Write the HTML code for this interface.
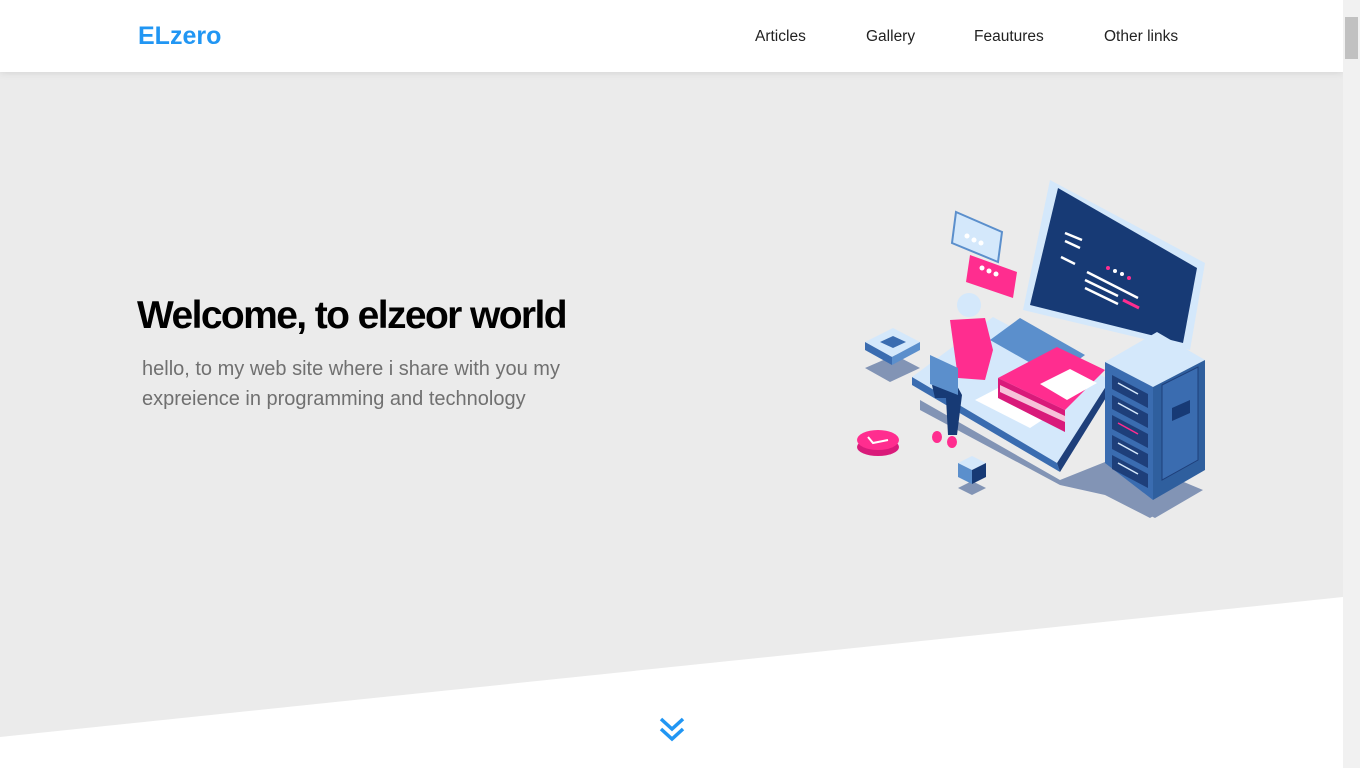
<!DOCTYPE html>
<html><head><meta charset="utf-8"><style>
html,body{margin:0;padding:0;width:1360px;height:768px;overflow:hidden;font-family:"Liberation Sans",sans-serif;background:#fff}
.page{position:absolute;left:0;top:0;width:1343px;height:768px;background:#ebebeb;overflow:hidden}
header{position:absolute;left:0;top:0;width:1343px;height:72px;background:#fff;box-shadow:0 0 8px rgba(0,0,0,.12);z-index:3}
.logo{position:absolute;left:138px;top:22px;font-size:25px;font-weight:bold;color:#2196f3}
nav a{position:absolute;top:28px;font-size:15.5px;color:#222;text-decoration:none}
h1{position:absolute;left:137px;top:294px;margin:0;font-size:39px;letter-spacing:-1.6px;font-weight:bold;color:#000}
p{position:absolute;left:142px;top:354px;margin:0;width:440px;font-size:20px;line-height:30px;color:#707070}
.sb{position:absolute;left:1343px;top:0;width:17px;height:768px;background:#f1f1f1}
.sb i{position:absolute;left:2px;top:17px;width:13px;height:42px;background:#c1c1c1}
</style></head><body>
<div class="page">
<header><div class="logo">ELzero</div>
<nav><a style="left:755px">Articles</a><a style="left:866px">Gallery</a><a style="left:974px">Feautures</a><a style="left:1104px">Other links</a></nav></header>
<h1>Welcome, to elzeor world</h1>
<p>hello, to my web site where i share with you my expreience in programming and technology</p>
<svg width="1343" height="768" style="position:absolute;left:0;top:0">
<polygon points="0,737 1343,597 1343,768 0,768" fill="#fff"/>
<path d="M661,719 L672,729 L683,719 M661,729 L672,739 L683,729" stroke="#2196f3" stroke-width="3.5" fill="none"/>
<polygon points="920,400 1060,480 1110,460 1140,470 1180,500 1150,518 1105,495 1060,485 920,410" fill="#8294b5"/>
<polygon points="865,368 895,355 920,368 890,382" fill="#8294b5"/>
<polygon points="958,488 972,481 986,488 972,495" fill="#8294b5"/>
<polygon points="1108,495 1155,470 1203,490 1155,518" fill="#8294b5"/>
<polygon points="912,377 993,317 1110,380 1057,463" fill="#d4e8fb"/>
<polygon points="912,377 1057,463 1060,472 912,385" fill="#3a6cb0"/>
<polygon points="1057,463 1110,380 1112,388 1060,472" fill="#1e3f7a"/>
<polygon points="990,340 1020,318 1085,355 1055,377" fill="#5b8fcc"/>
<polygon points="975,400 998,388 1050,415 1030,428" fill="#fff"/>
<polygon points="1050,180 1205,263 1190,350 1023,310" fill="#d4e8fb"/>
<polygon points="1058,188 1197,268 1183,343 1030,305" fill="#173a75"/>
<path d="M1065,233 L1082,240 M1065,241 L1080,248 M1061,257 L1075,264 M1087,272 L1138,298 M1085,280 L1118,296 M1085,288 L1118,304" stroke="#fff" stroke-width="2.5"/>
<path d="M1123,300 L1139,308" stroke="#ff2d8f" stroke-width="3"/>
<circle cx="1108" cy="268" r="2" fill="#ff2d8f"/><circle cx="1115" cy="271" r="2" fill="#fff"/><circle cx="1122" cy="274" r="2" fill="#fff"/><circle cx="1129" cy="278" r="2" fill="#ff2d8f"/>
<polygon points="970,255 1017,272 1013,298 966,282" fill="#ff2d8f"/>
<circle cx="982" cy="268" r="2.5" fill="#fff"/><circle cx="989" cy="271" r="2.5" fill="#fff"/><circle cx="996" cy="274" r="2.5" fill="#fff"/>
<polygon points="956,212 1002,232 998,262 952,243" fill="#d4e8fb" stroke="#5b8fcc" stroke-width="2"/>
<circle cx="967" cy="236" r="2.5" fill="#fff"/><circle cx="974" cy="240" r="2.5" fill="#fff"/><circle cx="981" cy="243" r="2.5" fill="#fff"/>
<polygon points="998,378 1057,347 1105,370 1065,410" fill="#ff2d8f"/>
<polygon points="998,378 1065,410 1065,432 998,398" fill="#d91a7a"/>
<polygon points="1000,385 1065,416 1065,422 1000,392" fill="#f7c3da"/>
<polygon points="1040,384 1070,369 1097,383 1067,400" fill="#fff"/>
<circle cx="969" cy="305" r="12" fill="#d4e8fb"/>
<polygon points="950,320 985,318 993,350 985,380 958,378" fill="#ff2d8f"/>
<polygon points="932,385 955,382 962,395 957,435 948,435 946,398 935,398" fill="#173a75"/>
<polygon points="930,355 958,368 958,395 930,384" fill="#5b8fcc"/>
<ellipse cx="937" cy="437" rx="5" ry="6" fill="#ff2d8f"/><ellipse cx="952" cy="442" rx="5" ry="6" fill="#ff2d8f"/>
<polygon points="865,342 893,328 920,342 892,357" fill="#d4e8fb"/>
<polygon points="865,342 892,357 892,365 865,350" fill="#3a6cb0"/>
<polygon points="892,357 920,342 920,350 892,365" fill="#5b8fcc"/>
<polygon points="880,342 893,336 906,342 893,348" fill="#3a6cb0"/>
<ellipse cx="878" cy="447" rx="21" ry="9" fill="#d91a7a"/>
<ellipse cx="878" cy="440" rx="21" ry="10" fill="#ff2d8f"/>
<path d="M868,437 L873,443 L888,440" stroke="#fff" stroke-width="2" fill="none"/>
<polygon points="958,463 972,456 986,463 972,470" fill="#d4e8fb"/>
<polygon points="958,463 972,470 972,484 958,477" fill="#5b8fcc"/>
<polygon points="972,470 986,463 986,477 972,484" fill="#173a75"/>
<polygon points="1105,362 1157,332 1205,360 1153,387" fill="#d4e8fb"/>
<polygon points="1105,362 1153,387 1153,500 1105,463" fill="#3a6cb0"/>
<polygon points="1153,387 1205,360 1205,470 1153,500" fill="#2f5f9e"/>
<polygon points="1162,385 1198,367 1198,460 1162,480" fill="#3a6cb0" stroke="#1e3f7a"/>
<polygon points="1172,408 1190,400 1190,413 1172,421" fill="#173a75"/>
<g fill="#1e3f7a"><polygon points="1112,375 1148,394 1148,408 1112,389"/><polygon points="1112,395 1148,414 1148,428 1112,409"/><polygon points="1112,415 1148,434 1148,448 1112,429"/><polygon points="1112,435 1148,454 1148,468 1112,449"/><polygon points="1112,455 1148,474 1148,488 1112,469"/></g>
<g stroke="#d4e8fb" stroke-width="1.5"><path d="M1118,383 L1138,394 M1118,403 L1138,414 M1118,443 L1138,454 M1118,463 L1138,474"/><path d="M1118,423 L1138,434" stroke="#ff2d8f"/></g>
</svg>
</div>
<div class="sb"><i></i></div>
</body></html>
